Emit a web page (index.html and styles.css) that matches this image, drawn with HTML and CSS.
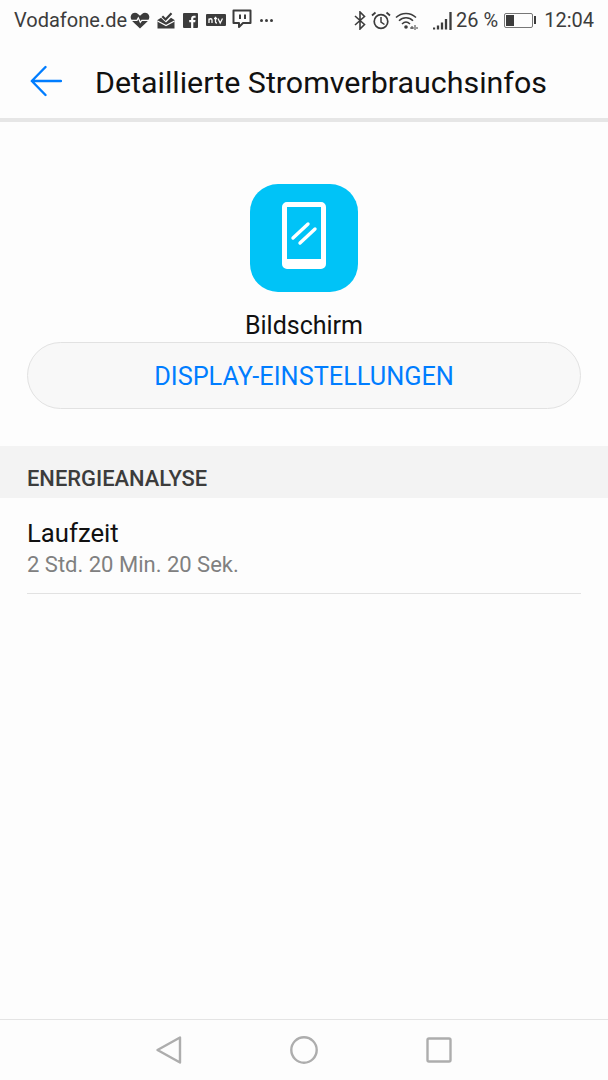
FILE: index.html
```html
<!DOCTYPE html>
<html>
<head>
    <title>Detaillierte Stromverbrauchsinfos</title>
    <link rel="stylesheet" href="styles.css">
</head>
<body>
<div class="screen">
    <!-- status bar -->
    <div class="status-bar">
        <div class="status-left">
            <span class="carrier">Vodafone.de</span>
            <svg class="ic-heart" width="20" height="17" viewBox="0 0 20 17"><path d="M10 16.500 2.600 9.400C.6 7.400.2 4.800 1.200 3 2.600.5 6 .2 8 2L10 3.800 12 2c2-1.800 5.400-1.500 6.800 1 1 1.800.6 4.400-1.400 6.400z" fill="#3c3c3c"/><path d="M0 8.300h7l1.300-2.500 2 4.500 1.500-2h8.200" fill="none" stroke="#fdfdfd" stroke-width="1.200"/></svg>
            <svg class="ic-mail" width="18" height="17" viewBox="0 0 18 17"><path d="M.5 8 4 5.800 9 10.500l5-4.700L17.500 8v8.500H.5z" fill="#3c3c3c"/><path d="M.5 9 9 13.500 17.500 9" fill="none" stroke="#fdfdfd" stroke-width="1.200"/><path d="M5.300 4.300 8.600 7.500 14.500 1.300" fill="none" stroke="#3c3c3c" stroke-width="2.200"/></svg>
            <svg class="ic-fb" width="15" height="15" viewBox="0 0 15 15"><rect width="15" height="15" rx="1" fill="#3c3c3c"/><path d="M10.300 15V9.300h1.900l.3-2.200h-2.200V5.800c0-.7.2-1.100 1.100-1.100h1.200V2.800c-.5-.1-1-.1-1.700-.1-1.700 0-2.800 1-2.800 2.900v1.500H6.200v2.200h1.900V15z" fill="#fdfdfd"/></svg>
            <svg class="ic-ntv" width="20" height="12" viewBox="0 0 20 12"><rect width="20" height="12" rx="1" fill="#3c3c3c"/><path d="M3 9V4.500M3 5.500c1-1 3-1.200 3 .5V9M9.500 2.800V8c0 .8.500 1 1.500 1M8 4.500h3M12 4.500l2.200 4.500 2.300-4.500" fill="none" stroke="#fdfdfd" stroke-width="1.300"/></svg>
            <svg class="ic-twitch" width="20" height="22" viewBox="0 0 20 22"><path d="M1.500 1.500h17v12.500h-7.500l-4 4v-4h-5.500z" fill="none" stroke="#3c3c3c" stroke-width="2" stroke-linejoin="round"/><path d="M8 5.500v4.500M13 5.500v4.500" stroke="#3c3c3c" stroke-width="2"/></svg>
            <span class="more-dots"><i></i><i></i><i></i></span>
        </div>
        <div class="status-right">
            <svg class="ic-bt" width="14" height="19" viewBox="0 0 14 19"><path d="M2 5 11.500 13.500 7 18V1l4.500 4.500L2 14" fill="none" stroke="#3c3c3c" stroke-width="1.600"/></svg>
            <svg class="ic-alarm" width="20" height="19" viewBox="0 0 20 19"><circle cx="10" cy="10.500" r="6.800" fill="none" stroke="#3c3c3c" stroke-width="1.700"/><path d="M10 6v5l3.500 2.500" fill="none" stroke="#3c3c3c" stroke-width="1.500"/><path d="M1 4.500 4.500 1.500M19 4.500 15.500 1.500" stroke="#3c3c3c" stroke-width="1.800"/></svg>
            <svg class="ic-wifi" width="24" height="19" viewBox="0 0 24 19"><g fill="none" stroke="#3c3c3c" stroke-width="1.500"><path d="M1 6.500C6.500 1 15.500 1 21 6.500"/><path d="M4 9.800c4-4 10-4 14 0"/><path d="M7 13c2.500-2.400 5.500-2.400 8 0"/></g><circle cx="11" cy="16" r="1.800" fill="#3c3c3c"/><path d="M15 17h4M17 15v3M20 14v5M22 16v2" stroke="#3c3c3c" stroke-width="1"/></svg>
            <svg class="ic-signal" width="20" height="19" viewBox="0 0 20 19"><path d="M1 16.500v2M5 14.500v4M9 11.500v7M13 8v10.500M17.500 1v18" stroke="#3c3c3c" stroke-width="2.300" fill="none"/></svg>
            <span class="pct">26 %</span>
            <span class="battery"><span class="battery-fill"></span></span>
            <span class="battery-tip"></span>
            <span class="clock">12:04</span>
        </div>
    </div>

    <!-- title bar -->
    <div class="title-bar">
        <svg class="back-arrow" width="32" height="32" viewBox="0 0 32 32"><path d="M31 16H2M15.500 2 1.800 16l13.700 14" fill="none" stroke="#007dff" stroke-width="2.400" stroke-linecap="round" stroke-linejoin="round"/></svg>
        <h1 class="title">Detaillierte Stromverbrauchsinfos</h1>
    </div>

    <!-- app block -->
    <div class="app-block">
        <div class="app-icon">
            <svg width="44" height="67" viewBox="0 0 44 67"><path fill-rule="evenodd" d="M5 0h34a5 5 0 0 1 5 5v57a5 5 0 0 1-5 5H5a5 5 0 0 1-5-5V5a5 5 0 0 1 5-5zM5 5v52h34V5z" fill="#fff"/><path d="M11 36 26 22M18 41 33 27" stroke="#fff" stroke-width="3.400" stroke-linecap="round"/></svg>
        </div>
        <div class="app-name">Bildschirm</div>
        <div class="pill-btn">DISPLAY-EINSTELLUNGEN</div>
    </div>

    <div class="section-head">ENERGIEANALYSE</div>

    <div class="row">
        <div class="row-title">Laufzeit</div>
        <div class="row-sub">2 Std. 20 Min. 20 Sek.</div>
    </div>

    <div class="spacer"></div>

    <!-- nav bar -->
    <div class="nav-bar">
        <svg width="26" height="28" viewBox="0 0 26 28"><path d="M24 1.500v25L1.500 14z" fill="none" stroke="#adadad" stroke-width="2.400" stroke-linejoin="round"/></svg>
        <svg width="28" height="28" viewBox="0 0 28 28"><circle cx="14" cy="14" r="12.700" fill="none" stroke="#adadad" stroke-width="2.400"/></svg>
        <svg width="26" height="26" viewBox="0 0 26 26"><rect x="1.500" y="1.500" width="23" height="23" rx="1.500" fill="none" stroke="#adadad" stroke-width="2.400"/></svg>
    </div>
</div>
</body>
</html>
```

FILE: styles.css
```css
html, body {
    margin: 0;
    padding: 0;
}
.screen {
    width: 608px;
    height: 1080px;
    display: flex;
    flex-direction: column;
    background: #fdfdfd;
    font-family: Roboto, "Liberation Sans", sans-serif;
    overflow: hidden;
}

/* status bar */
.status-bar {
    height: 40px;
    padding: 0 14px;
    display: flex;
    justify-content: space-between;
    align-items: center;
    color: #3c3c3c;
    font-size: 20px;
    box-sizing: border-box;
}
.status-left, .status-right {
    display: flex;
    align-items: center;
}
.status-left svg, .status-right svg {
    flex: none;
}
.ic-heart { margin-left: 3px; }
.ic-mail { margin-left: 7px; }
.ic-fb { margin-left: 8px; }
.ic-ntv { margin-left: 8px; }
.ic-twitch { margin-left: 6px; }
.more-dots {
    display: flex;
    gap: 2px;
    margin-left: 8px;
}
.more-dots i {
    width: 3px;
    height: 3px;
    border-radius: 50%;
    background: #3c3c3c;
}
.ic-alarm { margin-left: 4px; }
.ic-wifi { margin-left: 4px; }
.ic-signal { margin-left: 14px; }
.pct { margin-left: 3px; }
.battery {
    margin-left: 6px;
    width: 29px;
    height: 15px;
    border: 1.500px solid #777;
    border-radius: 2px;
    box-sizing: border-box;
    padding: 1px;
    display: flex;
}
.battery-fill {
    width: 8px;
    background: #3c3c3c;
}
.battery-tip {
    margin-left: 1px;
    width: 2px;
    height: 8px;
    background: #3c3c3c;
}
.clock {
    margin-left: 8px;
}

/* title bar */
.title-bar {
    height: 78px;
    padding-left: 30px;
    display: flex;
    align-items: center;
    border-bottom: 4px solid #e6e6e6;
}
.back-arrow {
    margin-top: 3px;
}
.title {
    margin: 6px 0 0 33px;
    font-size: 30.4px;
    font-weight: 400;
    color: #111;
    white-space: nowrap;
}

/* app icon + button */
.app-block {
    display: flex;
    flex-direction: column;
    align-items: center;
    padding-top: 62px;
}
.app-icon {
    width: 108px;
    height: 108px;
    padding-bottom: 5px;
    box-sizing: border-box;
    background: #00c3f7;
    border-radius: 28px;
    display: flex;
    align-items: center;
    justify-content: center;
}
.app-name {
    margin-top: 20px;
    font-size: 25px;
    line-height: 27px;
    color: #111;
}
.pill-btn {
    margin-top: 3px;
    width: 554px;
    height: 67px;
    padding-top: 2px;
    box-sizing: border-box;
    border: 1.500px solid #e2e2e2;
    border-radius: 34px;
    background: #f8f8f8;
    color: #007dff;
    font-size: 25.3px;
    display: flex;
    align-items: center;
    justify-content: center;
}

/* section */
.section-head {
    margin-top: 37px;
    height: 52px;
    padding: 12px 27px 0;
    box-sizing: border-box;
    display: flex;
    align-items: center;
    background: #f3f3f3;
    color: #3c3c3c;
    font-size: 21.9px;
    font-weight: 500;
}
.row {
    margin: 0 27px;
    height: 96px;
    box-sizing: border-box;
    border-bottom: 1px solid #e2e2e2;
    padding-top: 20px;
}
.row-title {
    font-size: 25.7px;
    line-height: 30px;
    color: #111;
}
.row-sub {
    margin-top: 4px;
    font-size: 22px;
    line-height: 26px;
    color: #808080;
}
.spacer {
    flex: 1;
}

/* nav */
.nav-bar {
    height: 60px;
    border-top: 1px solid #e4e4e4;
    display: flex;
    align-items: center;
    justify-content: center;
    gap: 108px;
}
```
